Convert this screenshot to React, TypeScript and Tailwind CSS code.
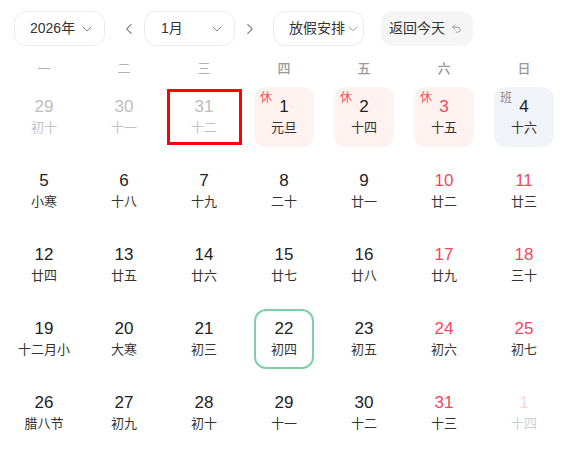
import React from 'react';
import { ChevronDown, ChevronLeft, ChevronRight, Undo2 } from 'lucide-react';

type Day = {
  n: number;
  lunar: string;
  kind?: 'prev' | 'next';
  weekend?: boolean;
  tag?: '休' | '班';
  today?: boolean;
  selected?: boolean;
};

const WEEK = ['一', '二', '三', '四', '五', '六', '日'];

const DAYS: Day[] = [
  { n: 29, lunar: '初十', kind: 'prev' },
  { n: 30, lunar: '十一', kind: 'prev' },
  { n: 31, lunar: '十二', kind: 'prev', today: true },
  { n: 1, lunar: '元旦', tag: '休' },
  { n: 2, lunar: '十四', tag: '休' },
  { n: 3, lunar: '十五', tag: '休', weekend: true },
  { n: 4, lunar: '十六', tag: '班' },
  { n: 5, lunar: '小寒' },
  { n: 6, lunar: '十八' },
  { n: 7, lunar: '十九' },
  { n: 8, lunar: '二十' },
  { n: 9, lunar: '廿一' },
  { n: 10, lunar: '廿二', weekend: true },
  { n: 11, lunar: '廿三', weekend: true },
  { n: 12, lunar: '廿四' },
  { n: 13, lunar: '廿五' },
  { n: 14, lunar: '廿六' },
  { n: 15, lunar: '廿七' },
  { n: 16, lunar: '廿八' },
  { n: 17, lunar: '廿九', weekend: true },
  { n: 18, lunar: '三十', weekend: true },
  { n: 19, lunar: '十二月小' },
  { n: 20, lunar: '大寒' },
  { n: 21, lunar: '初三' },
  { n: 22, lunar: '初四', selected: true },
  { n: 23, lunar: '初五' },
  { n: 24, lunar: '初六', weekend: true },
  { n: 25, lunar: '初七', weekend: true },
  { n: 26, lunar: '腊八节' },
  { n: 27, lunar: '初九' },
  { n: 28, lunar: '初十' },
  { n: 29, lunar: '十一' },
  { n: 30, lunar: '十二' },
  { n: 31, lunar: '十三', weekend: true },
  { n: 1, lunar: '十四', kind: 'next' },
];

function DayCell({ d }: { d: Day }) {
  let box = 'w-[60px] h-[60px] rounded-[12px]';
  if (d.tag === '休') box += ' bg-[#fff2f1]';
  if (d.tag === '班') box += ' bg-[#f0f3f7]';
  if (d.selected) box += ' border-2 border-[#7fd0a7] rounded-[10px]';
  if (d.today) box = 'w-[75px] h-[56px] border-[3px] border-[#ff0000]';

  let numColor = 'text-[#222]';
  let lunarColor = 'text-[#333]';
  if (d.kind === 'prev') {
    numColor = 'text-[#bdbdbd]';
    lunarColor = 'text-[#c2c2c2]';
  } else if (d.kind === 'next') {
    numColor = 'text-[#fdd5d5]';
    lunarColor = 'text-[#cfcfcf]';
  } else if (d.weekend) {
    numColor = 'text-[#f5475a]';
  }

  return (
    <div className="flex h-[60px] items-center justify-center">
      <div className={`relative flex flex-col items-center justify-center ${box}`}>
        {d.tag && (
          <span
            className={`absolute left-[6px] top-[5px] text-[12px] leading-none ${
              d.tag === '休' ? 'text-[#f5505a]' : 'text-[#888]'
            }`}
          >
            {d.tag}
          </span>
        )}
        <span className={`text-[17px] leading-[20px] ${numColor}`}>{d.n}</span>
        <span className={`mt-[2px] text-[13px] leading-[18px] whitespace-nowrap ${lunarColor}`}>{d.lunar}</span>
      </div>
    </div>
  );
}

export default function App() {
  return (
    <div
      className="w-[566px] h-[453px] overflow-hidden bg-white"
      style={{ fontFamily: '"Liberation Sans", "Noto Sans CJK SC", sans-serif' }}
    >
      {/* toolbar */}
      <div className="flex items-center pl-[14px] pt-[11px]">
        <button className="flex h-[35px] w-[91px] items-center justify-between rounded-[12px] border border-[#ebebeb] pl-[15px] pr-[9px] text-[14px] text-[#333]">
          <span>2026年</span>
          <ChevronDown size={16} strokeWidth={1.5} className="text-[#888]" />
        </button>
        <ChevronLeft size={18} strokeWidth={1.5} className="ml-[15px] text-[#888]" />
        <button className="ml-[6px] flex h-[35px] w-[91px] items-center justify-between rounded-[12px] border border-[#ebebeb] pl-[16px] pr-[9px] text-[14px] text-[#333]">
          <span>1月</span>
          <ChevronDown size={16} strokeWidth={1.5} className="text-[#888]" />
        </button>
        <ChevronRight size={18} strokeWidth={1.5} className="ml-[6px] text-[#888]" />
        <button className="ml-[14px] flex h-[35px] w-[91px] items-center whitespace-nowrap rounded-[12px] border border-[#ebebeb] pl-[15px] text-[14px] text-[#333]">
          <span>放假安排</span>
          <ChevronDown size={14} strokeWidth={1.5} className="ml-[1px] text-[#888]" />
        </button>
        <button className="ml-[17px] flex h-[35px] w-[92px] items-center whitespace-nowrap rounded-[12px] bg-[#f5f5f5] pl-[8px] text-[14px] text-[#333]">
          <span>返回今天</span>
          <Undo2 size={11} strokeWidth={1.75} className="ml-[6px] text-[#888]" />
        </button>
      </div>

      {/* weekday header */}
      <div className="mt-[13px] grid grid-cols-[repeat(7,80px)] px-[4px]">
        {WEEK.map((w, i) => (
          <div
            key={w}
            className={`text-center text-[13px] leading-[20px] ${i < 3 ? 'text-[#b0b0b0]' : 'text-[#999] font-medium'}`}
          >
            {w}
          </div>
        ))}
      </div>

      {/* days */}
      <div className="mt-[8px] grid grid-cols-[repeat(7,80px)] gap-y-[14px] px-[4px]">
        {DAYS.map((d, i) => (
          <DayCell key={i} d={d} />
        ))}
      </div>
    </div>
  );
}
